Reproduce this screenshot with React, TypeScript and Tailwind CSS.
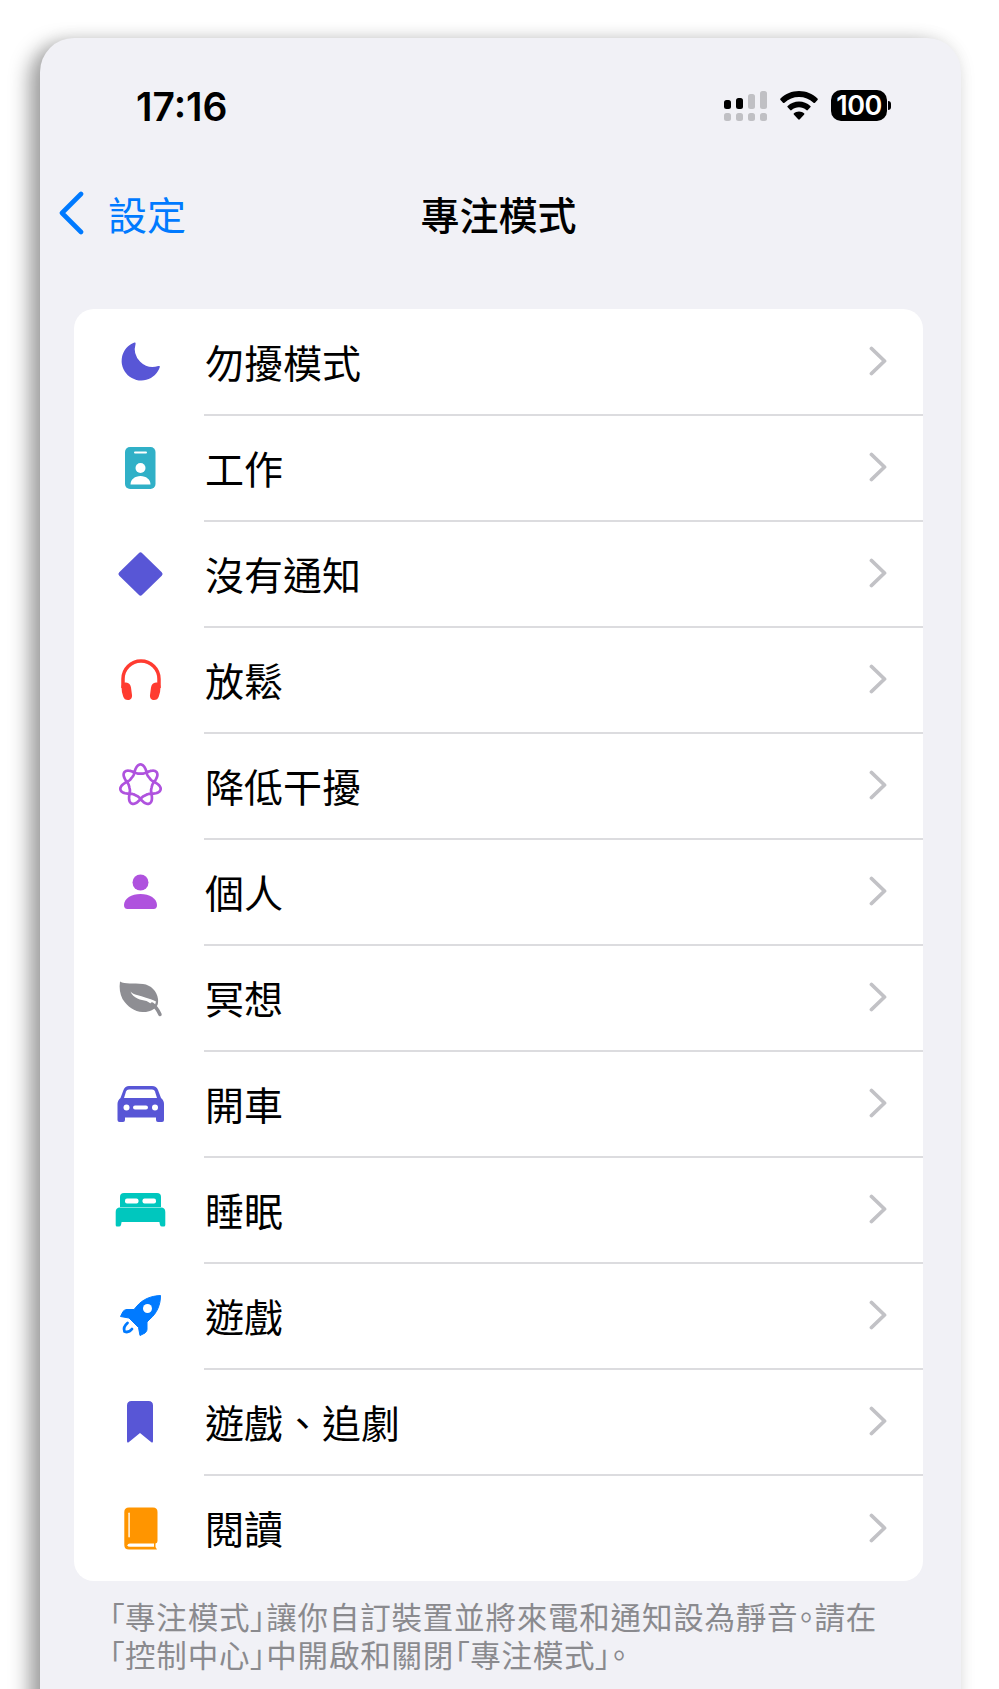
import type { ReactNode } from 'react';

const INDIGO = '#5856d6';

// Seven interlaced lobes: a curve that goes round twice
function lobePath() {
  const points: string[] = [];
  for (let i = 0; i <= 280; i++) {
    const t = (i / 280) * 4 * Math.PI;
    const a = t + Math.PI / 2;
    const r = 15 + 4.6 * Math.cos(3.5 * a) + 1 * Math.cos(7 * a);
    points.push(`${(24.5 + r * Math.cos(t)).toFixed(2)} ${(23 + r * Math.sin(t)).toFixed(2)}`);
  }
  return `M${points.join('L')}Z`;
}

// All list icons share a 48x48 box, centred in the row
function Icon({ children }: { children: ReactNode }) {
  return (
    <svg viewBox="0 0 48 48" className="-mt-[2px] h-12 w-12 shrink-0 overflow-visible">
      {children}
    </svg>
  );
}

const focusModes: { label: string; icon: ReactNode }[] = [
  {
    label: '勿擾模式',
    icon: (
      <path
        d="M18.5 4.5A19.6 19.6 0 1 0 44 28.5q-.6-1-1.8-.4A18 18 0 0 1 19.6 5.8q.3-1.4-1.1-1.3Z"
        fill={INDIGO}
      />
    ),
  },
  {
    label: '工作',
    icon: (
      <>
        <rect x="9" y="3" width="30.5" height="42" rx="5" fill="#30b0c7" />
        <rect x="18" y="7.5" width="13" height="2" rx="1" fill="#fff" />
        <circle cx="24.5" cy="24" r="5" fill="#fff" />
        <path d="M14.5 40.5c0-5 4.4-8.5 10-8.5s10 3.5 10 8.5Z" fill="#fff" />
      </>
    ),
  },
  {
    label: '沒有通知',
    icon: (
      <path
        d="M24.5 5 44 24 24.5 43 5 24Z"
        fill={INDIGO}
        stroke={INDIGO}
        strokeWidth="5"
        strokeLinejoin="round"
      />
    ),
  },
  {
    label: '放鬆',
    icon: (
      <>
        <path
          d="M7 32v-9a18 18 0 0 1 36 0v9"
          fill="none"
          stroke="#ff3b30"
          strokeWidth="3.5"
        />
        <path
          d="M5.5 31c0-3 2-5 4.500-4.500 3 .5 4.500 2 5 5l1 7.500c.4 3-1.500 5-4 5s-4-1-4.800-3.500Q5.500 36 5.500 31Z"
          fill="#ff3b30"
        />
        <path
          d="M44.500 31c0-3-2-5-4.500-4.500-3 .5-4.500 2-5 5L34 39c-.4 3 1.500 5 4 5s4-1 4.800-3.500Q44.500 36 44.500 31Z"
          fill="#ff3b30"
        />
      </>
    ),
  },
  {
    label: '降低干擾',
    icon: <path d={lobePath()} fill="none" stroke="#af52de" strokeWidth="2.7" />,
  },
  {
    label: '個人',
    icon: (
      <>
        <circle cx="24.5" cy="14.5" r="8" fill="#af52de" />
        <path
          d="M8 37c0-6.500 7.500-11 16.500-11S41 30.500 41 37q0 4-3.500 4h-26Q8 41 8 37Z"
          fill="#af52de"
        />
      </>
    ),
  },
  {
    label: '冥想',
    icon: (
      <>
        <path
          d="M4 7.500C9 10.500 17 9 27 10c8 1 14 7 15 15 .2 2 .2 4-.5 6-3 5-9 7.500-15 7-8-.5-15-5-20-13C4 20 3 14 4 7.500Z"
          fill="#8e8e93"
        />
        <path
          d="M14.500 17.500c1.500 2 4 3 6.500 3.500 3 .7 6 1.500 9 2.700 3 1 6.500 2 10 3.800l-1.500 5c-2.500-2.500-5-4-8-5.500-3-.7-6-1-9-2.500-3-1.500-6-3.500-7-7Z"
          fill="#fff"
        />
        <path
          d="M36 30c3.500 2.500 6 6 8 10.500"
          fill="none"
          stroke="#8e8e93"
          strokeWidth="3.500"
          strokeLinecap="round"
        />
      </>
    ),
  },
  {
    label: '開車',
    icon: (
      <>
        <path
          d="M13 6h23c3 0 5 1.500 6 4l3 8c2 1.500 3 3.500 3 6v16q0 2-2 2h-4q-2 0-2-2v-2.500H9V40q0 2-2 2H3.500q-2 0-2-2V24c0-2.500 1-4.500 3-6l3-8c1-2.500 3-4 5.500-4Z"
          fill={INDIGO}
        />
        <path d="M13 9.500h23c1.500 0 2.500.8 3 2l2 6.500H8l2-6.500c.5-1.200 1.500-2 3-2Z" fill="#fff" />
        <circle cx="10.500" cy="27.500" r="3" fill="#fff" />
        <circle cx="39" cy="27.500" r="3" fill="#fff" />
        <rect x="17" y="25.500" width="15" height="4" rx="2" fill="#fff" />
      </>
    ),
  },
  {
    label: '睡眠',
    icon: (
      <>
        <path d="M8 7h33q4 0 4 4v10H4V11q0-4 4-4Z" fill="#00c7be" />
        <rect x="9" y="12.500" width="13.500" height="5" rx="2" fill="#fff" />
        <rect x="26.500" y="12.500" width="13.500" height="5" rx="2" fill="#fff" />
        <path
          d="M4 21.500h41q4.300 0 4.300 4.500v13q0 1.500-1.500 1.500H46q-1.500 0-2-1.500l-.6-3H5.600l-.6 3q-.5 1.500-2 1.500H1q-1.300 0-1.300-1.500V26q0-4.500 4.300-4.500Z"
          fill="#00c7be"
        />
      </>
    ),
  },
  {
    label: '遊戲',
    icon: (
      <>
        <path
          d="M44.500 3.500C35 4 27 7 21 14l-3 3.500h-7c-2 0-3 1-4 2l-2.500 5 8.500 1.500 9.500 9.500 1.500 8 5-2.500c1-1 2-2 2-4v-7l3-3c7-6 10.500-14 10.500-23.500Z"
          fill="#007aff"
          stroke="#007aff"
          strokeWidth="1"
          strokeLinejoin="round"
        />
        <circle cx="31.500" cy="16.500" r="4.500" fill="#fff" />
        <path
          d="M11.500 31c-3 2.500-4 6-3 8.500 2.500 1 5.500 0 7.500-2.500"
          fill="none"
          stroke="#007aff"
          strokeWidth="2.800"
          strokeLinecap="round"
        />
      </>
    ),
  },
  {
    label: '遊戲、追劇',
    icon: (
      <path
        d="M11 7.500Q11 3 15.500 3h17Q37 3 37 7.500V43q0 2.500-2 1L24 35 13 44q-2 1.500-2-1Z"
        fill={INDIGO}
      />
    ),
  },
  {
    label: '閱讀',
    icon: (
      <>
        <path
          d="M13 3.500h24q4.500 0 4.500 4.500v29q0 2-2 2.500v3.500l1.500 2.500H13q-4.700 0-4.700-4.500V8q0-4.500 4.700-4.500Z"
          fill="#ff9500"
        />
        <rect x="12.300" y="8.500" width="1.600" height="25" rx=".8" fill="#fff" opacity=".85" />
        <path d="M14 39.500h24v3.300H14q-2.500 0-2.500-1.600t2.500-1.700Z" fill="#fff" />
      </>
    ),
  },
];

export default function App() {
  return (
    <div className="h-[1689px] w-[999px] overflow-hidden bg-white pl-[40px] pt-[38px] font-['Noto_Sans_CJK_TC','Noto_Sans',sans-serif]">
      <div className="h-[1700px] w-[921px] rounded-t-[34px] bg-[#f1f1f6] pt-[47px] shadow-[-11px_6px_20px_rgba(0,0,0,0.36),0_0_18px_rgba(0,0,0,0.07)]">
        {/* Status bar */}
        <div className="flex h-[40px] items-center justify-between pl-[96px] pr-[70px]">
          <span className="mt-[2px] font-['Inter',sans-serif] text-[39px] font-semibold leading-none text-black">
            17:16
          </span>
          <div className="flex items-center">
            <svg viewBox="0 0 44 31" className="h-[31px] w-[44px]">
              <rect x="0" y="10" width="7" height="9" rx="2.500" fill="#000" />
              <rect x="12" y="8" width="7" height="11" rx="2.500" fill="#000" />
              <rect x="24" y="4" width="7" height="15" rx="2.500" fill="#c0c0c4" />
              <rect x="36" y="1" width="7" height="18" rx="2.500" fill="#c0c0c4" />
              <rect x="0" y="23" width="7" height="8" rx="2.500" fill="#c0c0c4" />
              <rect x="12" y="23" width="7" height="8" rx="2.500" fill="#c0c0c4" />
              <rect x="24" y="23" width="7" height="8" rx="2.500" fill="#c0c0c4" />
              <rect x="36" y="23" width="7" height="8" rx="2.500" fill="#c0c0c4" />
            </svg>
            <svg viewBox="0 0 38 29" className="ml-[12px] h-[29px] w-[38px]">
              <path
                d="M19 0C12 0 5.500 2.700.5 7.500c-.5.500-.5 1 0 1.500l2.500 2.700c.5.500 1 .5 1.500 0C8.500 8 13.500 6 19 6s10.500 2 14.500 5.700c.5.500 1 .5 1.500 0l2.500-2.700c.5-.5.500-1 0-1.500C32.500 2.700 26 0 19 0Z"
                fill="#000"
              />
              <path
                d="M19 10.500c-4.300 0-8.300 1.600-11.300 4.400-.5.400-.5 1 0 1.400l2.500 2.700c.4.500 1 .5 1.500 0 2-1.700 4.600-2.700 7.300-2.700s5.300 1 7.300 2.700c.5.500 1.100.5 1.500 0l2.500-2.700c.5-.4.500-1 0-1.400-3-2.800-7-4.400-11.300-4.400Z"
                fill="#000"
              />
              <path
                d="M19 20.500c-2 0-3.700.7-5 1.800-.5.400-.5 1 0 1.400l4.200 4.600c.5.500 1.100.5 1.600 0l4.200-4.600c.5-.4.500-1 0-1.400-1.300-1.100-3-1.800-5-1.800Z"
                fill="#000"
              />
            </svg>
            <div className="ml-[13px] flex h-[31px] w-[56px] items-center justify-center rounded-[10px] bg-black font-['Inter',sans-serif] text-[27px] font-semibold leading-none tracking-[-0.5px] text-white">
              100
            </div>
            <div className="ml-[1px] h-[9px] w-[3px] rounded-r-[4px] bg-black" />
          </div>
        </div>

        {/* Nav bar */}
        <div className="mt-[58px] grid h-[60px] grid-cols-[1fr_auto_1fr] items-center pl-[18px] pr-[22px]">
          <div className="flex items-center">
            <svg viewBox="0 0 26 44" className="h-[44px] w-[26px]">
              <path
                d="M23 3 4 22l19 19"
                fill="none"
                stroke="#007aff"
                strokeWidth="4.600"
                strokeLinecap="round"
                strokeLinejoin="round"
              />
            </svg>
            <span className="ml-[24px] text-[39px] leading-none text-[#007aff]">設定</span>
          </div>
          <span className="text-[39px] font-medium leading-none text-black">專注模式</span>
          <div />
        </div>

        {/* Focus list */}
        <div className="ml-[34px] mt-[66px] w-[849px] overflow-hidden rounded-[20px] bg-white pt-[1px]">
          {focusModes.map((mode, i) => {
            const last = i === focusModes.length - 1;
            return (
              <div
                key={mode.label}
                className={`flex items-center pl-[42px] ${last ? 'h-[105px]' : 'h-[106px]'}`}
              >
                <Icon>{mode.icon}</Icon>
                <div
                  className={`ml-[40px] flex h-full flex-1 items-center justify-between pb-[2px] pr-[36px] ${
                    last ? '' : 'border-b-2 border-[#dcdcdf]'
                  }`}
                >
                  <span className="ml-[1px] text-[39px] leading-none text-black">{mode.label}</span>
                  <svg viewBox="0 0 18 30" className="h-[30px] w-[18px]">
                    <path
                      d="M2.500 2.500 15.500 15l-13 12.500"
                      fill="none"
                      stroke="#c2c2c6"
                      strokeWidth="3.800"
                      strokeLinecap="round"
                      strokeLinejoin="round"
                    />
                  </svg>
                </div>
              </div>
            );
          })}
        </div>

        {/* Footer note, brackets set half-width like the iOS font */}
        <p className="ml-[69px] mt-[17px] w-[790px] text-[30.5px] leading-[37.5px] tracking-[0.8px] text-[#8a8a8e] [font-feature-settings:'palt']">
          「專注模式」讓你自訂裝置並將來電和通知設為靜音。請在「控制中心」中開啟和關閉「專注模式」。
        </p>
      </div>
    </div>
  );
}
